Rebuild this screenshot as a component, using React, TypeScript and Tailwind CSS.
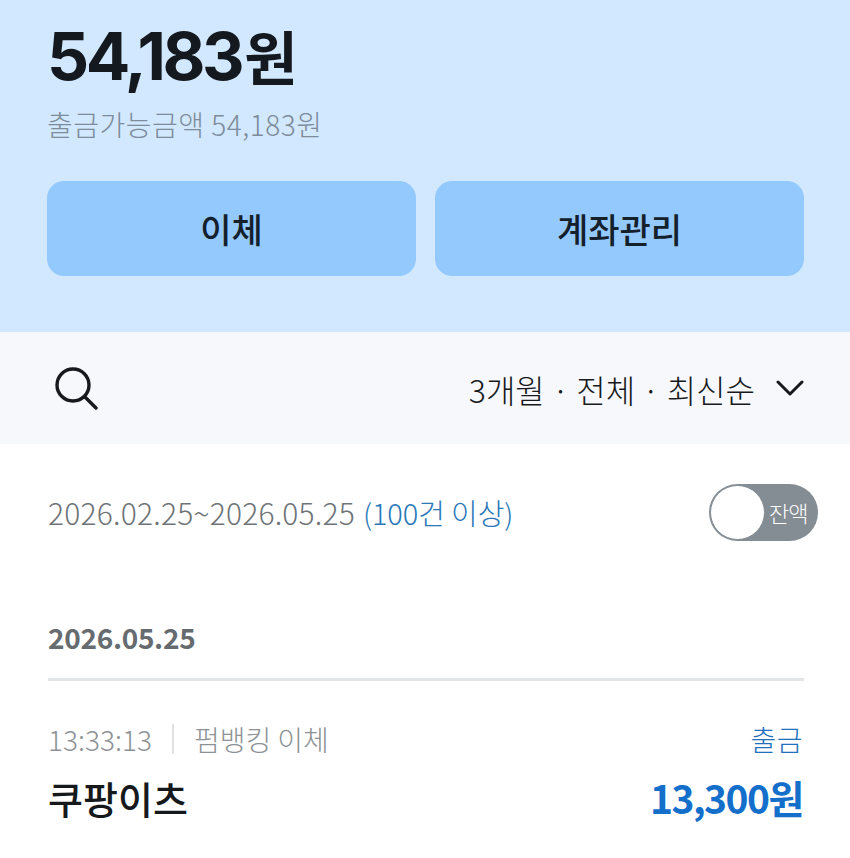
import React from "react";

const font = { fontFamily: '"Noto Sans CJK KR", "Noto Sans", sans-serif' };

export default function App() {
  return (
    <div className="w-[850px] h-[858px] overflow-hidden bg-white flex flex-col" style={font}>
      <section className="h-[332px] bg-[#d2e8fe] pl-[47px] pr-[46px] flex flex-col">
        <div className="h-[106px] flex items-end">
          <div className="text-[66px] leading-[106px] pt-[3px] h-[106px] font-bold tracking-[-3.4px] text-[#14191f] font-['Inter','Noto_Sans_CJK_KR',sans-serif]">54,183<span className="text-[58px] tracking-normal ml-[3px]">원</span></div>
        </div>
        <div className="h-[36px] text-[28px] leading-[36px] tracking-[0.5px] text-[#7c8c9b] font-light">출금가능금액 54,183원</div>
        <div className="mt-[39px] flex gap-[19px]">
          <button className="w-[369px] h-[95px] rounded-[17px] bg-[#93c9fd] text-[34px] font-medium text-[#14202c]">이체</button>
          <button className="w-[369px] h-[95px] rounded-[17px] bg-[#93c9fd] text-[34px] font-medium text-[#14202c]">계좌관리</button>
        </div>
      </section>
      <section className="h-[112px] bg-[#f6f8fc] pl-[55px] pr-[46px] flex items-center justify-between">
        <svg width="43" height="43" viewBox="0 0 43 43" fill="none" stroke="#17191c" strokeWidth="3.4" strokeLinecap="round">
          <circle cx="18" cy="18" r="16" />
          <path d="M30 30 L41 41" />
        </svg>
        <div className="flex items-center gap-[21px]">
          <span className="text-[32px] font-light text-[#17191c] pt-[2px]">3개월 · 전체 · 최신순</span>
          <svg width="28" height="18" viewBox="0 0 28 18" fill="none" stroke="#17191c" strokeWidth="3" strokeLinecap="round" strokeLinejoin="round">
            <path d="M2 3 L14 15 L26 3" />
          </svg>
        </div>
      </section>
      <section className="flex-1 pl-[48px] pr-[46px] flex flex-col">
        <div className="mt-[40px] h-[56px] flex items-center justify-between">
          <div className="text-[30px] font-light tracking-[0.2px] text-[#6f7478]">
            2026.02.25~2026.05.25 <span className="text-[#2a78b8] text-[29px] tracking-[-0.1px] ml-[1px]">(100건 이상)</span>
          </div>
          <div className="relative w-[109px] h-[57px] mr-[-14px] rounded-full bg-[#858d94]">
            <div className="absolute left-[1px] top-[1px] w-[55px] h-[55px] rounded-full bg-white border-[1.5px] border-[#858d94]"></div>
            <span className="absolute left-[60px] top-[13px] text-[22px] leading-[30px] tracking-[-1px] font-light text-white">잔액</span>
          </div>
        </div>
        <div className="mt-[73px] h-[48px] text-[28px] leading-[48px] font-bold tracking-[-0.3px] text-[#666b70]">2026.05.25</div>
        <div className="mt-[17px] h-[3px] bg-[#e2e5e8] w-[756px]"></div>
        <div className="mt-[38px] flex justify-between items-center h-[40px]">
          <div className="flex items-center text-[28px] font-light text-[#8e9296]">
            <span>13:33:13</span>
            <span className="mx-[20px] w-[2px] h-[30px] bg-[#dfe1e3]"></span>
            <span>펌뱅킹 이체</span>
          </div>
          <span className="text-[28px] font-light text-[#1f71bd] mr-[1px] tracking-[0.5px]">출금</span>
        </div>
        <div className="mt-[13px] flex justify-between items-center h-[50px]">
          <span className="text-[38px] font-medium text-[#16191c]">쿠팡이츠</span>
          <span className="text-[39px] font-bold tracking-[-1.5px] text-[#146fcb] mr-[1px]">13,300원</span>
        </div>
      </section>
    </div>
  );
}
